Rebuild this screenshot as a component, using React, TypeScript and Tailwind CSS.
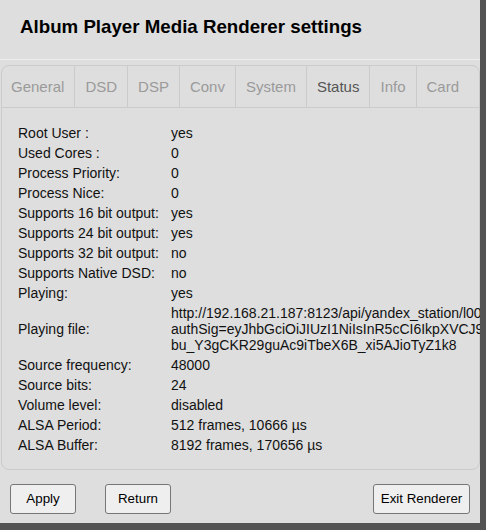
const tabs = ['General', 'DSD', 'DSP', 'Conv', 'System', 'Status', 'Info', 'Card'];

const rows: [string, string][] = [
  ['Root User :', 'yes'],
  ['Used Cores :', '0'],
  ['Process Priority:', '0'],
  ['Process Nice:', '0'],
  ['Supports 16 bit output:', 'yes'],
  ['Supports 24 bit output:', 'yes'],
  ['Supports 32 bit output:', 'no'],
  ['Supports Native DSD:', 'no'],
  ['Playing:', 'yes'],
];

const rows2: [string, string][] = [
  ['Source frequency:', '48000'],
  ['Source bits:', '24'],
  ['Volume level:', 'disabled'],
  ['ALSA Period:', '512 frames, 10666 µs'],
  ['ALSA Buffer:', '8192 frames, 170656 µs'],
];

function Row({ label, value }: { label: string; value: string }) {
  return (
    <div className="flex items-center py-[2px] leading-4">
      <div className="w-[153px] shrink-0">{label}</div>
      <div className="whitespace-nowrap">{value}</div>
    </div>
  );
}

export default function App() {
  return (
    <div className="w-[486px] h-[530px] bg-[#535353] overflow-hidden" style={{ fontFamily: '"Liberation Sans", Arial, sans-serif' }}>
      <div className="w-[480px] h-[523px] bg-[#dedede] overflow-hidden flex flex-col text-[#111]">
        <div className="h-[59px] pl-[20px] pt-[16px]">
          <h3 className="text-[18.72px] font-bold text-black leading-[21px]">Album Player Media Renderer settings</h3>
        </div>
        <div className="h-px bg-[#eeeeee]" />
        <div className="mt-[5px] ml-[1px] w-[479px] border border-[#cbcbcb] rounded-[8px]">
          <div className="flex h-[42px] border-b border-[#cbcbcb] text-[15px]">
            {tabs.map((t, i) => (
              <div
                key={t}
                className={
                  (i === 0 ? 'pl-[9px] pr-[10px] ' : 'px-[10px] ') +
                  'pt-[10px] ' +
                  (i < tabs.length - 1 ? 'border-r border-[#cbcbcb] ' : '') +
                  (t === 'Status' ? 'text-[#555555]' : 'text-[#9a9a9a]')
                }
              >
                {t}
              </div>
            ))}
          </div>
          <div className="pl-[16px] pt-[15px] pb-[14px] text-[14px]">
            {rows.map(([l, v]) => (
              <Row key={l} label={l} value={v} />
            ))}
            <div className="flex items-center py-[2px] leading-4">
              <div className="w-[153px] shrink-0">Playing file:</div>
              <div className="whitespace-nowrap">
                <div>http://192.168.21.187:8123/api/yandex_station/l00s7kq2?</div>
                <div>authSig=eyJhbGciOiJIUzI1NiIsInR5cCI6IkpXVCJ9.eyJpc3Mi</div>
                <div>bu_Y3gCKR29guAc9iTbeX6B_xi5AJioTyZ1k8</div>
              </div>
            </div>
            {rows2.map(([l, v]) => (
              <Row key={l} label={l} value={v} />
            ))}
          </div>
        </div>
        <div className="flex items-center mt-[14px] px-[10px] text-[13.33px] text-black">
          <button className="w-[66px] h-[30px] bg-[#efefef] border border-[#767676] rounded-[3px]">Apply</button>
          <button className="ml-[29px] w-[66px] h-[30px] bg-[#efefef] border border-[#767676] rounded-[3px]">Return</button>
          <button className="ml-auto w-[97px] h-[30px] bg-[#efefef] border border-[#767676] rounded-[3px]">Exit Renderer</button>
        </div>
      </div>
    </div>
  );
}
